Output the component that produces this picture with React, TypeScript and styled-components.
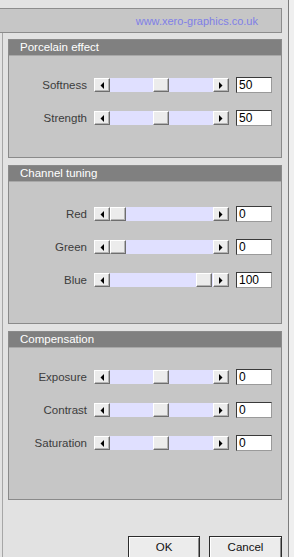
import React from "react";
import styled, { createGlobalStyle } from "styled-components";

const Global = createGlobalStyle`
  html, body { margin: 0; padding: 0; }
  body {
    background: #e2e2e2;
    font-family: "Liberation Sans", Arial, sans-serif;
    font-size: 11px;
    overflow: hidden;
  }
`;

const Frame = styled.div`
  width: 294px;
  height: 557px;
  display: flex;
  overflow: hidden;
  background: #e2e2e2;
`;

const Content = styled.div`
  width: 288px;
  height: 557px;
  display: flex;
  flex-direction: column;
  padding-top: 8px;
  box-sizing: border-box;
  overflow: hidden;
`;

const RightEdge = styled.div`
  width: 5px;
  border-left: 1px solid #7c7c7c;
  background: #efefef;
`;

const TopBar = styled.div`
  flex: none;
  height: 25px;
  margin-right: 6px;
  box-sizing: border-box;
  border: 1px solid #8c8c8c;
  border-left: none;
  background: #c6c6c6;
  display: flex;
  align-items: center;
  justify-content: flex-end;
  padding-right: 23px;
`;

const Link = styled.span`
  color: #7f7fe6;
  font-size: 11px;
`;

const Body = styled.div`
  flex: 1;
  min-height: 0;
  overflow: hidden;
  margin-left: 2px;
  border-left: 1px solid #a6a6a6;
  padding: 6px 6px 0 5px;
  display: flex;
  flex-direction: column;
  gap: 7px;
`;

const Panel = styled.section<{ $h: number }>`
  flex: none;
  height: ${(p) => p.$h}px;
  box-sizing: border-box;
  border: 1px solid #8a8a8a;
  background: #c6c6c6;
  display: flex;
  flex-direction: column;
`;

const PanelHeader = styled.div`
  height: 15px;
  background: #808080;
  color: #ffffff;
  font-size: 11.5px;
  line-height: 15px;
  padding-left: 11px;
  border-bottom: 1px solid #a8a8a8;
`;

const Rows = styled.div<{ $top: number }>`
  padding-top: ${(p) => p.$top}px;
  display: flex;
  flex-direction: column;
  gap: 17px;
`;

const Row = styled.div`
  display: grid;
  grid-template-columns: 78px 135px 36px;
  column-gap: 7px;
  align-items: center;
  height: 16px;
`;

const Label = styled.span`
  text-align: right;
  color: #3c3c3c;
  font-size: 11.5px;
`;

const Scroll = styled.div`
  display: flex;
  height: 14px;
`;

const Bevel = styled.div`
  box-sizing: border-box;
  background: #ececec;
  border-top: 1px solid #ffffff;
  border-left: 1px solid #ffffff;
  border-right: 1px solid #6e6e6e;
  border-bottom: 1px solid #6e6e6e;
  box-shadow: inset -1px -1px 0 #b4b4b4;
`;

const ArrowBtn = styled(Bevel)`
  width: 16px;
  height: 14px;
  display: flex;
  align-items: center;
  justify-content: center;
`;

const Track = styled.div`
  flex: 1;
  position: relative;
  background: #e0e0ff;
`;

const Thumb = styled(Bevel)`
  position: absolute;
  top: 0;
  width: 16px;
  height: 14px;
`;

const Input = styled.div`
  height: 16px;
  box-sizing: border-box;
  background: #ffffff;
  border: 1px solid #3a3a3a;
  border-right-color: #9a9a9a;
  border-bottom-color: #9a9a9a;
  color: #000;
  font-size: 12px;
  line-height: 14px;
  padding-left: 2px;
`;

const Footer = styled.div`
  flex: none;
  display: flex;
  justify-content: flex-end;
  gap: 9px;
  padding: 29px 0 0 0;
`;

const Button = styled.div<{ $w: number }>`
  width: ${(p) => p.$w}px;
  height: 23px;
  box-sizing: border-box;
  background: #ececec;
  border: 1px solid #2c2c2c;
  box-shadow: inset 1px 1px 0 #ffffff, inset -1px -1px 0 #8a8a8a;
  display: flex;
  align-items: center;
  justify-content: center;
  color: #111;
  font-size: 11.5px;
  padding-bottom: 2px;
`;

const Arrow = ({ dir }: { dir: "l" | "r" }) => (
  <svg width="4" height="7" viewBox="0 0 4 7">
    {dir === "l" ? (
      <polygon points="4,0 4,7 0.5,3.5" fill="#000" />
    ) : (
      <polygon points="0,0 0,7 3.5,3.5" fill="#000" />
    )}
  </svg>
);

type Slider = { label: string; value: number; min: number; max: number };

const TRACK = 102;
const THUMB = 16;

const SliderRow = ({ s }: { s: Slider }) => {
  const pos = ((s.value - s.min) / (s.max - s.min)) * (TRACK - THUMB);
  return (
    <Row>
      <Label>{s.label}</Label>
      <Scroll>
        <ArrowBtn>
          <Arrow dir="l" />
        </ArrowBtn>
        <Track>
          <Thumb style={{ left: `${pos}px` }} />
        </Track>
        <ArrowBtn>
          <Arrow dir="r" />
        </ArrowBtn>
      </Scroll>
      <Input>{s.value}</Input>
    </Row>
  );
};

const panels: { title: string; h: number; top: number; rows: Slider[] }[] = [
  {
    title: "Porcelain effect",
    h: 119,
    top: 21,
    rows: [
      { label: "Softness", value: 50, min: 0, max: 100 },
      { label: "Strength", value: 50, min: 0, max: 100 },
    ],
  },
  {
    title: "Channel tuning",
    h: 159,
    top: 24,
    rows: [
      { label: "Red", value: 0, min: 0, max: 100 },
      { label: "Green", value: 0, min: 0, max: 100 },
      { label: "Blue", value: 100, min: 0, max: 100 },
    ],
  },
  {
    title: "Compensation",
    h: 169,
    top: 21,
    rows: [
      { label: "Exposure", value: 0, min: -100, max: 100 },
      { label: "Contrast", value: 0, min: -100, max: 100 },
      { label: "Saturation", value: 0, min: -100, max: 100 },
    ],
  },
];

export default function App() {
  return (
    <>
      <Global />
      <Frame>
        <Content>
          <TopBar>
            <Link>www.xero-graphics.co.uk</Link>
          </TopBar>
          <Body>
            {panels.map((p) => (
              <Panel key={p.title} $h={p.h}>
                <PanelHeader>{p.title}</PanelHeader>
                <Rows $top={p.top}>
                  {p.rows.map((r) => (
                    <SliderRow key={r.label} s={r} />
                  ))}
                </Rows>
              </Panel>
            ))}
            <Footer>
              <Button $w={72}>OK</Button>
              <Button $w={73}>Cancel</Button>
            </Footer>
          </Body>
        </Content>
        <RightEdge />
      </Frame>
    </>
  );
}
